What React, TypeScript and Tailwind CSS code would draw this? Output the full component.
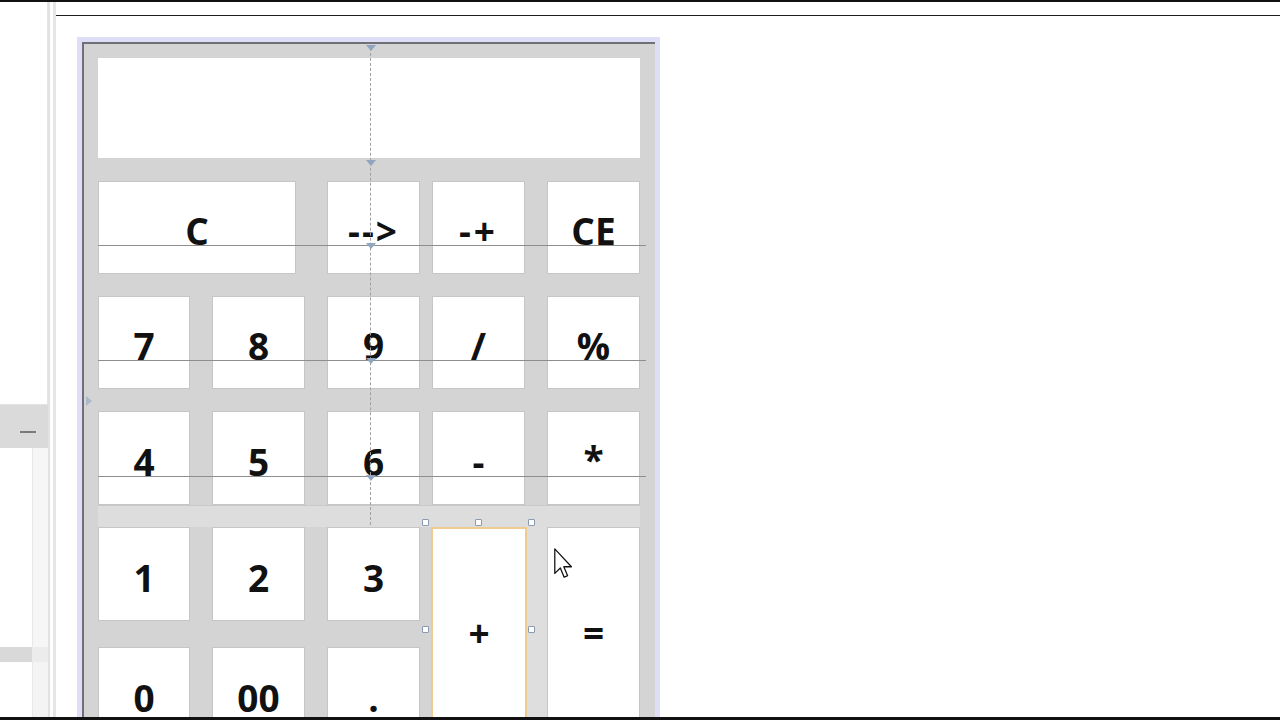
import React from "react";

const FONT = { fontFamily: '"Open Sans", "Liberation Sans", sans-serif' };

type Key = {
  label: string;
  cls: string;
};

// keypad cells placed on a grid whose odd tracks are keys and even tracks are the gaps
const KEYS: Key[] = [
  { label: "C", cls: "col-start-1 col-span-3 row-start-3 w-[198px] justify-self-start pt-[6px]" },
  { label: "-->", cls: "col-start-5 row-start-3 tracking-[2px] pt-[6px]" },
  { label: "-+", cls: "col-start-7 row-start-3 tracking-[3px] pt-[6px]" },
  { label: "CE", cls: "col-start-9 row-start-3 pt-[6px]" },
  { label: "7", cls: "col-start-1 row-start-5 pt-[6px]" },
  { label: "8", cls: "col-start-3 row-start-5 pt-[6px]" },
  { label: "9", cls: "col-start-5 row-start-5 pt-[6px]" },
  { label: "/", cls: "col-start-7 row-start-5 pt-[6px]" },
  { label: "%", cls: "col-start-9 row-start-5 pt-[6px]" },
  { label: "4", cls: "col-start-1 row-start-7 pt-[6px]" },
  { label: "5", cls: "col-start-3 row-start-7 pt-[6px]" },
  { label: "6", cls: "col-start-5 row-start-7 pt-[6px]" },
  { label: "-", cls: "col-start-7 row-start-7 pt-[6px]" },
  { label: "*", cls: "col-start-9 row-start-7 pt-[2px]" },
  { label: "1", cls: "col-start-1 row-start-9 pt-[6px]" },
  { label: "2", cls: "col-start-3 row-start-9 pt-[6px]" },
  { label: "3", cls: "col-start-5 row-start-9 pt-[6px]" },
  { label: "=", cls: "col-start-9 row-start-9 row-span-3 pb-[4px]" },
  { label: "0", cls: "col-start-1 row-start-11 pt-[6px]" },
  { label: "00", cls: "col-start-3 row-start-11 pt-[6px]" },
  { label: ".", cls: "col-start-5 row-start-11 pt-[6px]" },
];

function Handle({ cls }: { cls: string }) {
  return (
    <span
      className={`absolute h-[7px] w-[7px] rounded-[1px] border border-[#8a9bb0] bg-white ${cls}`}
    />
  );
}

function Marker({ cls }: { cls: string }) {
  return (
    <span
      className={`absolute h-0 w-0 border-x-[5px] border-t-[6px] border-x-transparent border-t-[#8fa5c0] ${cls}`}
    />
  );
}

function LeftPanel() {
  return (
    <div className="flex w-[48px] shrink-0 flex-col">
      <div className="h-[403px] shrink-0 border-b border-r border-[#e4e4e4] bg-white" />
      <div className="flex h-[43px] shrink-0 items-center justify-end bg-[#dadada] pr-[12px] pt-[10px]">
        <span className="h-[2px] w-[16px] bg-[#7a7a7a]" />
      </div>
      <div className="flex h-[199px] shrink-0">
        <div className="w-[32px] bg-white" />
        <div className="flex-1 border-l border-[#e8e8e8] bg-[#f6f6f6]" />
      </div>
      <div className="flex h-[15px] shrink-0">
        <div className="w-[32px] bg-[#d9d9d9]" />
        <div className="flex-1 bg-[#ececec]" />
      </div>
      <div className="flex flex-1">
        <div className="w-[32px] bg-white" />
        <div className="flex-1 border-l border-[#e8e8e8] bg-[#f4f4f4]" />
      </div>
    </div>
  );
}

function Calculator() {
  return (
    <div className="ml-[21px] mt-[21px] w-fit shrink-0 border-[5px] border-[#dedef6]">
      <div className="relative border-l-2 border-t-2 border-[#6f6f75] bg-[#d4d4d4] pb-0 pl-[14px] pr-[15px] pt-[14px]">
        <div className="grid grid-cols-[92px_22px_93px_22px_93px_12px_93px_22px_93px] grid-rows-[100px_23px_93px_22px_93px_22px_94px_22px_94px_26px_94px]">
          <div className="col-span-9 col-start-1 row-start-1 bg-white" />
          <div className="col-span-9 col-start-1 row-start-8 border-t border-[#c8c8c8] bg-[#dddddd]" />
          <div className="col-span-3 col-start-8 row-span-3 row-start-9 bg-[#dedede]" />

          {KEYS.map((k) => (
            <div
              key={k.label}
              className={`flex items-center justify-center border border-[#c6c6c6] bg-white text-[37px] font-bold leading-none text-[#111] ${k.cls}`}
              style={FONT}
            >
              {k.label}
            </div>
          ))}

          <div className="relative col-start-7 row-span-3 row-start-9 -ml-[1px] -mr-[2px]">
            <div
              className="flex h-full items-center justify-center border-2 border-[#f0cb8e] bg-white pb-[4px] text-[37px] font-bold leading-none text-[#111]"
              style={FONT}
            >
              +
            </div>
            <Handle cls="-left-[9px] -top-[8px]" />
            <Handle cls="left-[44px] -top-[8px]" />
            <Handle cls="left-[97px] -top-[8px]" />
            <Handle cls="-left-[9px] top-[99px]" />
            <Handle cls="left-[97px] top-[99px]" />
          </div>
        </div>

        {/* designer snaplines */}
        <div className="absolute left-[286px] top-[4px] h-[477px] border-l border-dashed border-[#a0a0a0]" />
        <div className="absolute left-[14px] top-[201px] h-px w-[548px] bg-[#8e8e8e]" />
        <div className="absolute left-[14px] top-[316px] h-px w-[548px] bg-[#8e8e8e]" />
        <div className="absolute left-[14px] top-[432px] h-px w-[548px] bg-[#8e8e8e]" />
        <Marker cls="left-[282px] top-[1px]" />
        <Marker cls="left-[282px] top-[116px]" />
        <Marker cls="left-[282px] top-[199px]" />
        <Marker cls="left-[282px] top-[314px]" />
        <Marker cls="left-[282px] top-[431px]" />
        <span className="absolute left-[2px] top-[352px] h-0 w-0 border-y-[5px] border-l-[6px] border-y-transparent border-l-[#a9b9cc]" />
      </div>
    </div>
  );
}

export default function App() {
  return (
    <div className="relative flex h-[720px] w-[1280px] overflow-hidden border-b-[3px] border-t-2 border-[#111] bg-white">
      <LeftPanel />
      <div className="flex w-[8px] shrink-0 justify-between">
        <div className="w-[2px] bg-[#e2e2e2]" />
        <div className="w-[3px] bg-[#e6e6e6]" />
      </div>
      <div className="flex min-h-0 flex-1 flex-col">
        <div className="h-[14px] shrink-0 border-b border-[#1c1c1c]" />
        <Calculator />
      </div>

      {/* mouse pointer */}
      <svg
        className="absolute left-[554px] top-[546px]"
        width="19"
        height="31"
        viewBox="0 0 12 19.5"
      >
        <path
          d="M0.5 0.5 L0.5 16 L4 12.6 L6.4 18.4 L8.6 17.5 L6.2 11.8 L11 11.8 Z"
          fill="white"
          stroke="#111"
          strokeWidth="0.8"
          strokeLinejoin="round"
        />
      </svg>
    </div>
  );
}
